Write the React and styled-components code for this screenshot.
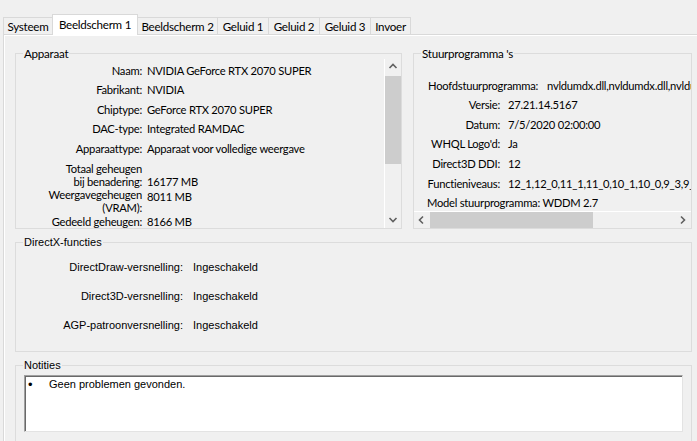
import React from 'react';
import styled, { createGlobalStyle } from 'styled-components';

const GlobalStyle = createGlobalStyle`
  html, body { margin: 0; padding: 0; background: #f0f0f0; }
  body {
    font-family: Lato, "Noto Sans", sans-serif;
    font-size: 11.2px;
    letter-spacing: -0.25px;
    color: #000;
  }
`;

const classic = `font-family: "Liberation Sans", Arial, sans-serif; font-size: 11px; letter-spacing: 0;`;

const Window = styled.div`
  width: 697px;
  height: 441px;
  overflow: hidden;
  background: #f0f0f0;
  display: flex;
  flex-direction: column;
`;

const TabStrip = styled.div`
  display: flex;
  align-items: flex-end;
  height: 34px;
  padding-left: 3px;
  box-sizing: border-box;
  position: relative;
  z-index: 1;
  flex-shrink: 0;
`;

const Tab = styled.div`
  box-sizing: border-box;
  width: ${(p) => p.$w}px;
  height: ${(p) => (p.$active ? 21 : 17)}px;
  margin-bottom: ${(p) => (p.$active ? -1 : 0)}px;
  margin-left: ${(p) => (p.$first ? 0 : -1)}px;
  padding-bottom: ${(p) => (p.$active ? 1 : 0)}px;
  border: 1px solid #d9d9d9;
  border-bottom: none;
  background: ${(p) => (p.$active ? '#ffffff' : '#f0f0f0')};
  display: flex;
  align-items: center;
  justify-content: center;
  font-size: 11.6px;
  line-height: 13px;
  white-space: nowrap;
  position: relative;
  z-index: ${(p) => (p.$active ? 2 : 1)};
`;

const Pane = styled.div`
  flex: 1;
  margin-left: 3px;
  border-top: 1px solid #d9d9d9;
  border-left: 1px solid #d9d9d9;
  background: #ffffff;
  padding: 1px 0 0 1px;
  display: flex;
  min-height: 0;
`;

const Page = styled.div`
  flex: 1;
  background: #f0f0f0;
  padding: 17px 0 0 10px;
  display: flex;
  flex-direction: column;
`;

const Row = styled.div`
  display: flex;
  gap: 11px;
`;

const Group = styled.div`
  position: relative;
  box-sizing: border-box;
  width: ${(p) => p.$w}px;
  height: ${(p) => p.$h}px;
  flex-shrink: 0;
  margin-top: ${(p) => p.$mt || 0}px;
  border: 1px solid #dcdcdc;
  display: flex;
  flex-direction: column;
`;

const GroupLabel = styled.span`
  position: absolute;
  left: 7px;
  top: -7px;
  padding: 0 1px;
  background: #f0f0f0;
  line-height: 13px;
  white-space: nowrap;
  ${(p) => (p.$classic ? classic : 'font-size: 11.6px;')}
`;

const ScrollView = styled.div`
  margin-top: 5px;
  height: 169px;
  display: flex;
  flex-direction: ${(p) => (p.$horizontal ? 'column' : 'row')};
`;

const List = styled.div`
  flex: 1;
  min-width: 0;
  min-height: 0;
  overflow: hidden;
  padding-top: ${(p) => p.$pt}px;
`;

const InfoRow = styled.div`
  display: grid;
  grid-template-columns: ${(p) => p.$lw}px auto;
  column-gap: ${(p) => p.$gap}px;
  height: ${(p) => p.$h}px;
  align-items: ${(p) => p.$align || 'start'};
  line-height: 13px;
  white-space: nowrap;
  ${(p) => (p.$classic ? classic : '')}
`;

const Label = styled.div`
  text-align: right;
  white-space: nowrap;
`;

const Value = styled.div`
  padding-top: ${(p) => p.$pt || 0}px;
`;

const PlainRow = styled.div`
  height: ${(p) => p.$h}px;
  padding-left: ${(p) => p.$pl}px;
  line-height: 13px;
  white-space: nowrap;
`;

const VScroll = styled.div`
  width: 17px;
  box-sizing: border-box;
  border-left: 1px solid #ffffff;
  display: flex;
  flex-direction: column;
  flex-shrink: 0;
`;

const HScroll = styled.div`
  height: 17px;
  box-sizing: border-box;
  border-top: 1px solid #ffffff;
  display: flex;
  flex-shrink: 0;
`;

const ArrowBtn = styled.div`
  width: 16px;
  height: 16px;
  display: flex;
  align-items: center;
  justify-content: center;
  flex-shrink: 0;
`;

const Thumb = styled.div`
  background: #cdcdcd;
  flex-shrink: 0;
  ${(p) =>
    p.$vertical
      ? `width: 16px; height: ${p.$size}px; margin-top: 1px;`
      : `height: 16px; width: ${p.$size}px;`}
`;

const Spacer = styled.div`
  flex: 1;
`;

const TextBox = styled.div`
  margin: 9px 8px 0 8px;
  height: 57px;
  box-sizing: border-box;
  background: #ffffff;
  border: 1px solid;
  border-color: #a0a0a0 #e3e3e3 #e3e3e3 #a0a0a0;
  box-shadow: inset 1px 1px 0 #696969;
  padding: 2px 0 0 3px;
  display: flex;
  line-height: 13px;
  ${classic}
`;

const Bullet = styled.span`
  width: 21px;
  flex-shrink: 0;
  font-size: 13px;
`;

const Chevron = ({ dir }) => {
  const paths = {
    up: 'M1.5 6 L5 2.5 L8.5 6',
    down: 'M1.5 3 L5 6.5 L8.5 3',
    left: 'M6 1.5 L2.5 5 L6 8.5',
    right: 'M3 1.5 L6.5 5 L3 8.5',
  };
  return (
    <svg width="10" height="10" viewBox="0 0 10 10">
      <path d={paths[dir]} fill="none" stroke="#606060" strokeWidth="1.6" />
    </svg>
  );
};

const tabs = [
  { t: 'Systeem', w: 50 },
  { t: 'Beeldscherm 1', w: 86, active: true },
  { t: 'Beeldscherm 2', w: 81 },
  { t: 'Geluid 1', w: 52 },
  { t: 'Geluid 2', w: 52 },
  { t: 'Geluid 3', w: 52 },
  { t: 'Invoer', w: 41 },
];

const device = [
  { l: 'Naam:', v: 'NVIDIA GeForce RTX 2070 SUPER', h: 19 },
  { l: 'Fabrikant:', v: 'NVIDIA', h: 20 },
  { l: 'Chiptype:', v: 'GeForce RTX 2070 SUPER', h: 19 },
  { l: 'DAC-type:', v: 'Integrated RAMDAC', h: 20 },
  { l: 'Apparaattype:', v: 'Apparaat voor volledige weergave', h: 18 },
  { l: ['Totaal geheugen', 'bij benadering:'], v: '16177 MB', h: 28, align: 'end' },
  { l: ['Weergavegeheugen', '(VRAM):'], v: '8011 MB', h: 27, pt: 2 },
  { l: 'Gedeeld geheugen:', v: '8166 MB', h: 13 },
];

const drivers = [
  { l: 'Hoofdstuurprogramma:', v: 'nvldumdx.dll,nvldumdx.dll,nvldumdx.dll,nvldumdx.dll', h: 19, lw: 124, gap: 9 },
  { l: 'Versie:', v: '27.21.14.5167', h: 20 },
  { l: 'Datum:', v: '7/5/2020 02:00:00', h: 19 },
  { l: "WHQL Logo'd:", v: 'Ja', h: 20 },
  { l: 'Direct3D DDI:', v: '12', h: 20 },
  { l: 'Functieniveaus:', v: '12_1,12_0,11_1,11_0,10_1,10_0,9_3,9_2,9_1', h: 19 },
];

const features = [
  { l: 'DirectDraw-versnelling:', v: 'Ingeschakeld' },
  { l: 'Direct3D-versnelling:', v: 'Ingeschakeld' },
  { l: 'AGP-patroonversnelling:', v: 'Ingeschakeld' },
];

export default function App() {
  return (
    <Window>
      <GlobalStyle />
      <TabStrip>
        {tabs.map((tab, i) => (
          <Tab key={tab.t} $w={tab.w} $active={tab.active} $first={i === 0}>
            {tab.t}
          </Tab>
        ))}
      </TabStrip>
      <Pane>
        <Page>
          <Row>
            <Group $w={387} $h={176}>
              <GroupLabel>Apparaat</GroupLabel>
              <ScrollView>
                <List $pt={5}>
                  {device.map((r, i) => (
                    <InfoRow key={i} $lw={126} $gap={5} $h={r.h} $align={r.align}>
                      <Label>
                        {Array.isArray(r.l) ? (
                          <>
                            {r.l[0]}
                            <br />
                            {r.l[1]}
                          </>
                        ) : (
                          r.l
                        )}
                      </Label>
                      <Value $pt={r.pt}>{r.v}</Value>
                    </InfoRow>
                  ))}
                </List>
                <VScroll>
                  <ArrowBtn>
                    <Chevron dir="up" />
                  </ArrowBtn>
                  <Thumb $vertical $size={88} />
                  <Spacer />
                  <ArrowBtn>
                    <Chevron dir="down" />
                  </ArrowBtn>
                </VScroll>
              </ScrollView>
            </Group>
            <Group $w={279} $h={176}>
              <GroupLabel>Stuurprogramma 's</GroupLabel>
              <ScrollView $horizontal>
                <List $pt={20}>
                  {drivers.map((r, i) => (
                    <InfoRow key={i} $lw={r.lw || 86} $gap={r.gap || 8} $h={r.h}>
                      <Label>{r.l}</Label>
                      <Value>{r.v}</Value>
                    </InfoRow>
                  ))}
                  <PlainRow $h={13} $pl={13}>
                    Model stuurprogramma: WDDM 2.7
                  </PlainRow>
                </List>
                <HScroll>
                  <ArrowBtn>
                    <Chevron dir="left" />
                  </ArrowBtn>
                  <Thumb $size={163} />
                  <Spacer />
                  <ArrowBtn>
                    <Chevron dir="right" />
                  </ArrowBtn>
                </HScroll>
              </ScrollView>
            </Group>
          </Row>
          <Group $w={677} $h={110} $mt={13}>
            <GroupLabel $classic>DirectX-functies</GroupLabel>
            <List $pt={18}>
              {features.map((r, i) => (
                <InfoRow key={i} $lw={167} $gap={10} $h={29} $classic>
                  <Label>{r.l}</Label>
                  <Value>{r.v}</Value>
                </InfoRow>
              ))}
            </List>
          </Group>
          <Group $w={677} $h={80} $mt={13}>
            <GroupLabel $classic>Notities</GroupLabel>
            <TextBox>
              <Bullet>•</Bullet>
              <span>Geen problemen gevonden.</span>
            </TextBox>
          </Group>
        </Page>
      </Pane>
    </Window>
  );
}
